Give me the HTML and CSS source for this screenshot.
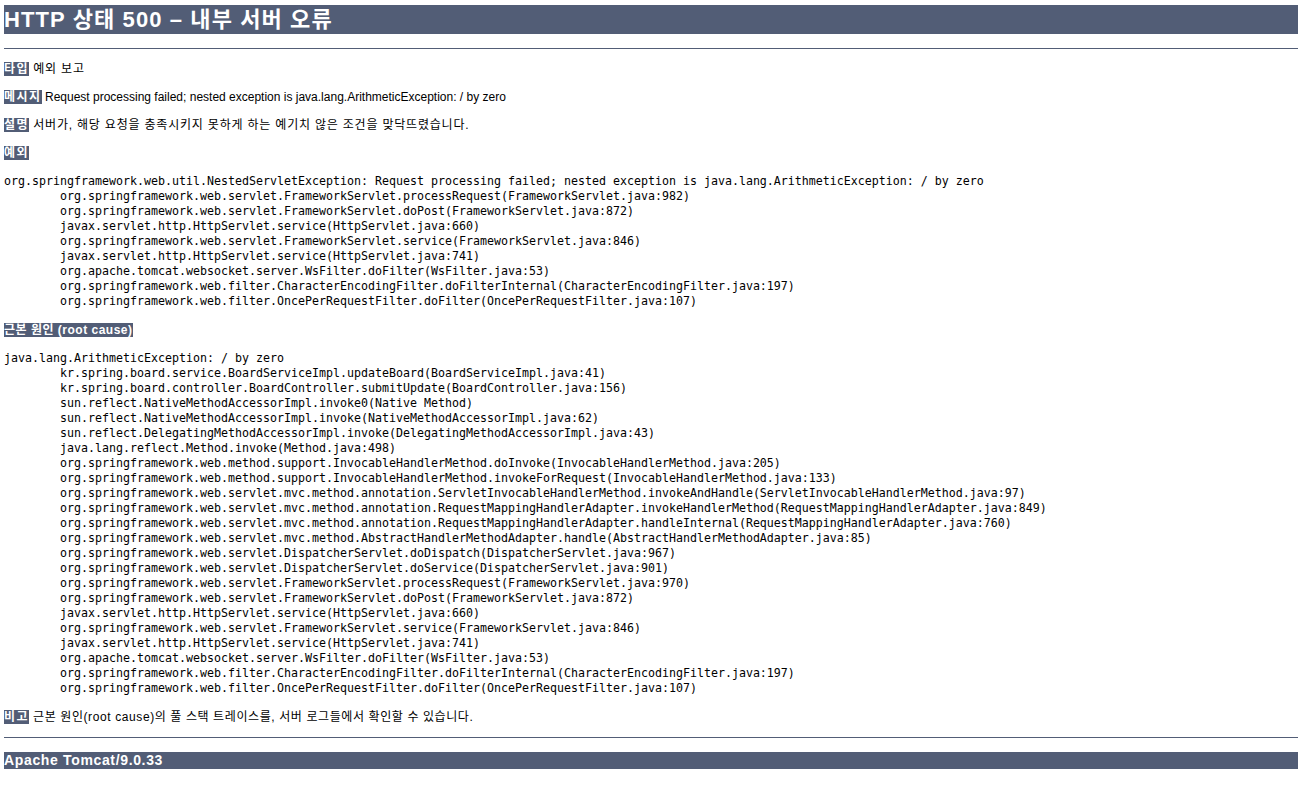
FILE: index.html
```html
<!DOCTYPE html>
<html lang="ko">
<head>
    <meta charset="UTF-8">
    <title>HTTP 상태 500 – 내부 서버 오류</title>
    <link rel="stylesheet" href="styles.css">
</head>
<body>
    <h1>HTTP 상태 500 – 내부 서버 오류</h1>
    <hr class="line">
    <p class="ko"><b>타입</b> 예외 보고</p>
    <p><b>메시지</b> Request processing failed; nested exception is java.lang.ArithmeticException: / by zero</p>
    <p class="ko"><b>설명</b> 서버가, 해당 요청을 충족시키지 못하게 하는 예기치 않은 조건을 맞닥뜨렸습니다.</p>
    <p><b>예외</b></p>
<pre>org.springframework.web.util.NestedServletException: Request processing failed; nested exception is java.lang.ArithmeticException: / by zero
        org.springframework.web.servlet.FrameworkServlet.processRequest(FrameworkServlet.java:982)
        org.springframework.web.servlet.FrameworkServlet.doPost(FrameworkServlet.java:872)
        javax.servlet.http.HttpServlet.service(HttpServlet.java:660)
        org.springframework.web.servlet.FrameworkServlet.service(FrameworkServlet.java:846)
        javax.servlet.http.HttpServlet.service(HttpServlet.java:741)
        org.apache.tomcat.websocket.server.WsFilter.doFilter(WsFilter.java:53)
        org.springframework.web.filter.CharacterEncodingFilter.doFilterInternal(CharacterEncodingFilter.java:197)
        org.springframework.web.filter.OncePerRequestFilter.doFilter(OncePerRequestFilter.java:107)
</pre>
    <p><b class="cause">근본 원인 (root cause)</b></p>
<pre>java.lang.ArithmeticException: / by zero
        kr.spring.board.service.BoardServiceImpl.updateBoard(BoardServiceImpl.java:41)
        kr.spring.board.controller.BoardController.submitUpdate(BoardController.java:156)
        sun.reflect.NativeMethodAccessorImpl.invoke0(Native Method)
        sun.reflect.NativeMethodAccessorImpl.invoke(NativeMethodAccessorImpl.java:62)
        sun.reflect.DelegatingMethodAccessorImpl.invoke(DelegatingMethodAccessorImpl.java:43)
        java.lang.reflect.Method.invoke(Method.java:498)
        org.springframework.web.method.support.InvocableHandlerMethod.doInvoke(InvocableHandlerMethod.java:205)
        org.springframework.web.method.support.InvocableHandlerMethod.invokeForRequest(InvocableHandlerMethod.java:133)
        org.springframework.web.servlet.mvc.method.annotation.ServletInvocableHandlerMethod.invokeAndHandle(ServletInvocableHandlerMethod.java:97)
        org.springframework.web.servlet.mvc.method.annotation.RequestMappingHandlerAdapter.invokeHandlerMethod(RequestMappingHandlerAdapter.java:849)
        org.springframework.web.servlet.mvc.method.annotation.RequestMappingHandlerAdapter.handleInternal(RequestMappingHandlerAdapter.java:760)
        org.springframework.web.servlet.mvc.method.AbstractHandlerMethodAdapter.handle(AbstractHandlerMethodAdapter.java:85)
        org.springframework.web.servlet.DispatcherServlet.doDispatch(DispatcherServlet.java:967)
        org.springframework.web.servlet.DispatcherServlet.doService(DispatcherServlet.java:901)
        org.springframework.web.servlet.FrameworkServlet.processRequest(FrameworkServlet.java:970)
        org.springframework.web.servlet.FrameworkServlet.doPost(FrameworkServlet.java:872)
        javax.servlet.http.HttpServlet.service(HttpServlet.java:660)
        org.springframework.web.servlet.FrameworkServlet.service(FrameworkServlet.java:846)
        javax.servlet.http.HttpServlet.service(HttpServlet.java:741)
        org.apache.tomcat.websocket.server.WsFilter.doFilter(WsFilter.java:53)
        org.springframework.web.filter.CharacterEncodingFilter.doFilterInternal(CharacterEncodingFilter.java:197)
        org.springframework.web.filter.OncePerRequestFilter.doFilter(OncePerRequestFilter.java:107)
</pre>
    <p class="ko mixed"><b>비고</b> 근본 원인(root cause)의 풀 스택 트레이스를, 서버 로그들에서 확인할 수 있습니다.</p>
    <hr class="line">
    <h3>Apache Tomcat/9.0.33</h3>
</body>
</html>
```

FILE: styles.css
```css
body {
    margin: 0 0 0 4px;
    font-family: "Liberation Sans", "Noto Sans CJK KR", sans-serif;
    color: black;
    background-color: white;
}

h1 {
    margin: 5px 0 14px;
    font-size: 22px;
    line-height: 29px;
    letter-spacing: 1.1px;
    color: white;
    background-color: #525D76;
}

h3 {
    margin: 14px 0;
    font-size: 14px;
    line-height: 17px;
    letter-spacing: 0.65px;
    color: white;
    background-color: #525D76;
}

b {
    letter-spacing: 1.5px;
    color: white;
    background-color: #525D76;
}

b.cause {
    letter-spacing: 0.5px;
}

p {
    margin: 12px 0;
    font-size: 12px;
    line-height: 16px;
}

/* hangul sits wider in the original font */
p.ko {
    letter-spacing: 0.8px;
}

p.mixed {
    letter-spacing: 0.6px;
}

pre {
    margin: 13px 0;
    font-family: "DejaVu Sans Mono", monospace;
    font-size: 11.63px;
    line-height: 15px;
}

.line {
    height: 1px;
    margin: 0;
    background-color: #525D76;
    border: none;
}
```
